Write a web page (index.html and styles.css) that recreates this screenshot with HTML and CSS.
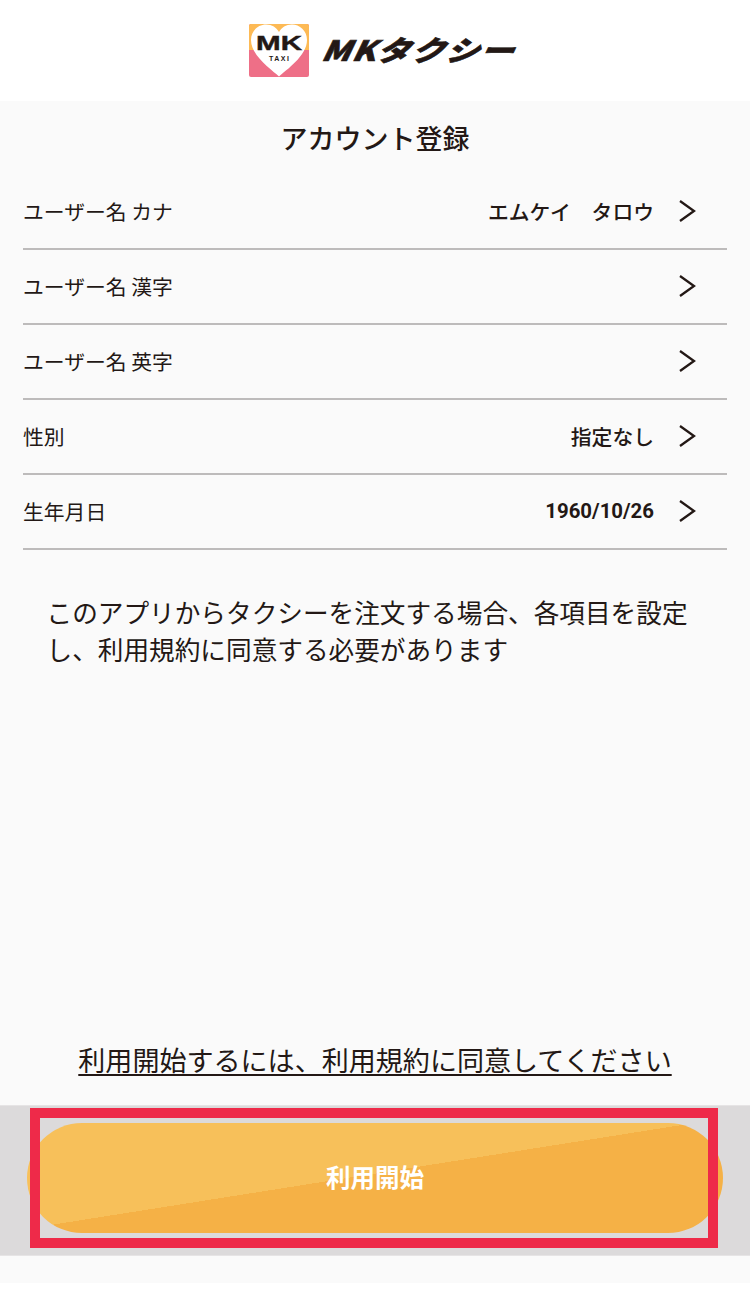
FILE: index.html
```html
<!DOCTYPE html>
<html lang="ja">
<head>
<meta charset="utf-8">
<title>アカウント登録</title>
<link rel="stylesheet" href="styles.css">
</head>
<body>
<div class="page">
  <header class="header">
    <svg class="logo-mark" viewBox="0 0 60 53" width="60" height="53" aria-hidden="true">
      <rect width="60" height="53" rx="2" fill="#ee6f87"/>
      <path d="M2 0H58a2 2 0 0 1 2 2V26H0V2a2 2 0 0 1 2-2Z" fill="#fdba55"/>
      <path d="M30 52.500 C23 46 2 32 2 16 C2 6.500 9.500 .500 17 .500 C23 .500 27.500 3.500 30 8 C32.500 3.500 37 .500 43 .500 C50.500 .500 58 6.500 58 16 C58 32 37 46 30 52.500Z" fill="#fff"/>
      <text class="logo-mk" x="7" y="26" textLength="46" lengthAdjust="spacingAndGlyphs">MK</text>
      <text class="logo-taxi" x="20" y="37" textLength="20">TAXI</text>
    </svg>
    <span class="logo-text">MKタクシー</span>
  </header>
  <main class="main">
    <h1 class="title">アカウント登録</h1>
    <ul class="rows">
      <li class="row"><span class="label">ユーザー名 カナ</span><span class="value">エムケイ　タロウ</span><svg class="chev" viewBox="0 0 18 24" width="18" height="24" aria-hidden="true"><path d="M2 2 L16 12 L2 22"/></svg></li>
      <li class="row"><span class="label">ユーザー名 漢字</span><span class="value"></span><svg class="chev" viewBox="0 0 18 24" width="18" height="24" aria-hidden="true"><path d="M2 2 L16 12 L2 22"/></svg></li>
      <li class="row"><span class="label">ユーザー名 英字</span><span class="value"></span><svg class="chev" viewBox="0 0 18 24" width="18" height="24" aria-hidden="true"><path d="M2 2 L16 12 L2 22"/></svg></li>
      <li class="row"><span class="label">性別</span><span class="value">指定なし</span><svg class="chev" viewBox="0 0 18 24" width="18" height="24" aria-hidden="true"><path d="M2 2 L16 12 L2 22"/></svg></li>
      <li class="row"><span class="label">生年月日</span><span class="value num">1960/10/26</span><svg class="chev" viewBox="0 0 18 24" width="18" height="24" aria-hidden="true"><path d="M2 2 L16 12 L2 22"/></svg></li>
    </ul>
    <p class="note">このアプリからタクシーを注文する場合、各項目を設定し、利用規約に同意する必要があります</p>
    <a class="terms" href="#">利用開始するには、利用規約に同意してください</a>
  </main>
  <footer class="footer">
    <button class="start" type="button">利用開始</button>
    <div class="highlight"></div>
  </footer>
  <div class="tail"></div>
</div>
</body>
</html>
```
FILE: styles.css
```css
* { box-sizing: border-box; }
html, body { margin: 0; padding: 0; background: #fff; }
body {
  font-family: "Noto Sans CJK JP", "Noto Sans", sans-serif;
  color: #231815;
}
.page { width: 750px; height: 1290px; overflow: hidden; }
.header {
  height: 101px;
  background: #fff;
  display: flex;
  align-items: flex-start;
  gap: 17px;
  padding: 24px 0 0 249px;
}
.logo-mark { flex: none; }
.logo-mk { font-family: "Liberation Sans", sans-serif; font-weight: 700; font-size: 19.500px; fill: #231815; stroke: #231815; stroke-width: .4; }
.logo-taxi { font-family: "Liberation Sans", sans-serif; font-weight: 700; font-size: 7px; fill: #231815; }
.logo-text {
  margin-top: 5px;
  font-weight: 900;
  font-size: 28px;
  line-height: 40px;
  letter-spacing: 1px;
  white-space: nowrap;
  transform: scaleX(1.19) skewX(-22deg);
  transform-origin: left center;
  -webkit-text-stroke: .6px #231815;
  color: #231815;
}
.main {
  height: 1004px;
  background: #fafafa;
  display: flex;
  flex-direction: column;
  padding: 16px 23px 0;
}
.title {
  margin: 0;
  height: 42px;
  font-size: 27px;
  line-height: 42px;
  font-weight: 500;
  text-align: center;
}
.rows { list-style: none; margin: 16px 0 0; padding: 0; }
.row {
  height: 75px;
  display: flex;
  align-items: center;
  padding: 0 31px 2px 0;
  border-bottom: 2px solid #bdbbbb;
  font-size: 20.800px;
}
.label { flex: 1; }
.value { font-weight: 500; font-size: 20.800px; margin-right: 24px; }
.num { font-family: "Roboto", sans-serif; font-weight: 700; font-size: 20.400px; }
.chev { flex: none; }
.chev path { fill: none; stroke: #231815; stroke-width: 2.300; }
.note {
  margin: 43px 0 0;
  padding: 0 23.500px;
  font-size: 25.650px;
  line-height: 37px;
  flex: 1;
}
.terms {
  align-self: center;
  margin-bottom: 26px;
  font-size: 27.050px;
  line-height: 38px;
  color: #231815;
  text-decoration: underline;
  text-underline-offset: 3px;
  text-decoration-thickness: 2px;
}
.footer {
  position: relative;
  height: 151px;
  background: #dcdadb;
  border-top: 1px solid #e6e4e5;
  border-bottom: 1px solid #e6e4e5;
  padding: 17px 27px 0;
}
.start {
  display: block;
  width: 696px;
  height: 110px;
  border: 0;
  border-radius: 55px;
  background: linear-gradient(171deg, #f7c05a 48%, #f5b146 48%);
  color: #fff;
  font-family: inherit;
  font-weight: 700;
  font-size: 24.500px;
  padding: 0 0 3px;
}
.highlight {
  position: absolute;
  left: 30px;
  top: 2px;
  width: 688px;
  height: 140px;
  border: 10px solid #ee2a49;
}
.tail { height: 27px; background: #fafafa; }
```
